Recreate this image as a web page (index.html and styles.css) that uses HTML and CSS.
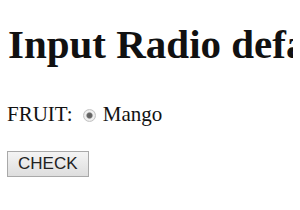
FILE: index.html
```html
<!DOCTYPE html>
<html lang="en">
<head>
    <meta charset="UTF-8">
    <title>Input Radio defaultChecked Property</title>
    <link rel="stylesheet" href="styles.css">
</head>
<body>
    <h1>Input Radio defaultChecked Property</h1>
    <form class="fruit">
        FRUIT: <input type="radio" name="fruit" id="mango" class="radio" checked disabled><label for="mango">Mango</label>
    </form>
    <p class="actions"><button type="button" class="btn">CHECK</button></p>
</body>
</html>
```

FILE: styles.css
```css
body {
    font-family: "Liberation Serif", "Times New Roman", serif;
    font-size: 21px;
    margin: 8px 7px;
    color: #111;
    background: #fff;
    white-space: nowrap;
    overflow: hidden;
}
h1 {
    font-size: 41px;
    line-height: 47px;
    margin: 13px 0 0 1px;
}
.fruit {
    margin: 34px 0 0;
    line-height: 24px;
}
.radio {
    appearance: none;
    -webkit-appearance: none;
    width: 13px;
    height: 13px;
    margin: 0 7px 0 5px;
    border: 1px solid #c4c4c4;
    border-radius: 50%;
    background: radial-gradient(circle, #5c5c5c 0, #6a6a6a 2.5px, #e6e6e6 3.5px, #f4f4f4 4.5px, #dcdcdc 6px);
    vertical-align: -1px;
}
.actions {
    margin: 24px 0 0;
}
.btn {
    font-family: "Liberation Sans", Arial, sans-serif;
    font-size: 17px;
    line-height: 20px;
    padding: 2px 10px;
    border: 1px solid #a9a9a9;
    border-radius: 0;
    background: linear-gradient(#f4f4f4, #dedede);
    color: #222;
}
```
